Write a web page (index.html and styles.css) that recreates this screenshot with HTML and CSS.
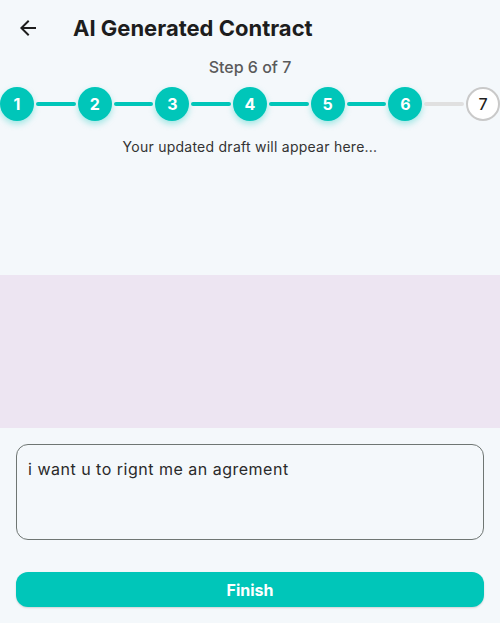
FILE: index.html
```html
<!DOCTYPE html>
<html lang="en">
<head>
<meta charset="utf-8">
<title>AI Generated Contract</title>
<link rel="stylesheet" href="styles.css">
</head>
<body>
<div class="page">
  <header class="header">
    <button class="back" aria-label="Back">
      <svg width="24" height="24" viewBox="0 0 24 24"><path d="M20 11H7.83l5.59-5.59L12 4l-8 8 8 8 1.41-1.41L7.83 13H20v-2z" fill="#1d1d1d"/></svg>
    </button>
    <h1 class="title">AI Generated Contract</h1>
  </header>
  <div class="step-label">Step 6 of 7</div>
  <div class="stepper">
    <div class="dot done">1</div><div class="line done"></div>
    <div class="dot done">2</div><div class="line done"></div>
    <div class="dot done">3</div><div class="line done"></div>
    <div class="dot done">4</div><div class="line done"></div>
    <div class="dot done">5</div><div class="line done"></div>
    <div class="dot done">6</div><div class="line"></div>
    <div class="dot">7</div>
  </div>
  <p class="draft">Your updated draft will appear here...</p>
  <div class="preview"></div>
  <textarea class="prompt">i want u to rignt me an agrement</textarea>
  <button class="finish">Finish</button>
</div>
</body>
</html>
```

FILE: styles.css
```css
* { box-sizing: border-box; }
html, body {
  margin: 0;
  padding: 0;
  background: #f4f8fb;
  font-family: Inter, "Noto Sans", sans-serif;
  color: #1d1d1d;
}
.page {
  width: 500px;
  height: 623px;
  display: flex;
  flex-direction: column;
}
.header {
  height: 56px;
  display: flex;
  align-items: center;
  padding-left: 16px;
}
.back {
  width: 24px;
  height: 24px;
  padding: 0;
  border: 0;
  background: none;
  display: flex;
}
.title {
  margin: 0 0 0 33px;
  font-size: 22px;
  font-weight: 700;
  color: #1d1d1d;
  letter-spacing: 0;
}
.step-label {
  height: 22px;
  line-height: 22px;
  text-align: center;
  font-size: 16px;
  font-weight: 500;
  color: #5a5a5a;
}
.stepper {
  margin-top: 9px;
  display: flex;
  align-items: center;
  height: 34px;
}
.dot {
  width: 34px;
  height: 34px;
  flex: none;
  border-radius: 50%;
  border: 2px solid #c9c9c9;
  background: #ffffff;
  color: #1f1f1f;
  font-size: 16px;
  font-weight: 500;
  display: flex;
  align-items: center;
  justify-content: center;
}
.dot.done {
  border: 0;
  background: #00c6b9;
  color: #ffffff;
  font-weight: 700;
  box-shadow: 0 3px 6px rgba(0, 198, 185, 0.35);
}
.line {
  flex: 1;
  height: 4px;
  margin: 0 2px;
  border-radius: 2px;
  background: #e0e0e0;
}
.line.done { background: #00c6b9; }
.draft {
  margin: 16px 0 0;
  height: 20px;
  line-height: 20px;
  text-align: center;
  font-size: 14px;
  letter-spacing: 0.25px;
  color: #333333;
}
.preview {
  margin-top: 118px;
  height: 153px;
  background: #ede5f2;
}
.prompt {
  margin: 16px 16px 0;
  height: 96px;
  border: 1px solid #6f7673;
  border-radius: 12px;
  background: transparent;
  padding: 13px 11px;
  font-family: Inter, "Noto Sans", sans-serif;
  font-size: 16px;
  letter-spacing: 0.5px;
  line-height: 22px;
  color: #2a2a2a;
  resize: none;
  outline: none;
}
.finish {
  margin: 32px 16px 0;
  height: 35px;
  border: 0;
  border-radius: 12px;
  background: #00c6b9;
  color: #ffffff;
  font-family: Inter, "Noto Sans", sans-serif;
  font-size: 16px;
  font-weight: 700;
  box-shadow: 0 1px 2px rgba(0, 0, 0, 0.15);
}
```
